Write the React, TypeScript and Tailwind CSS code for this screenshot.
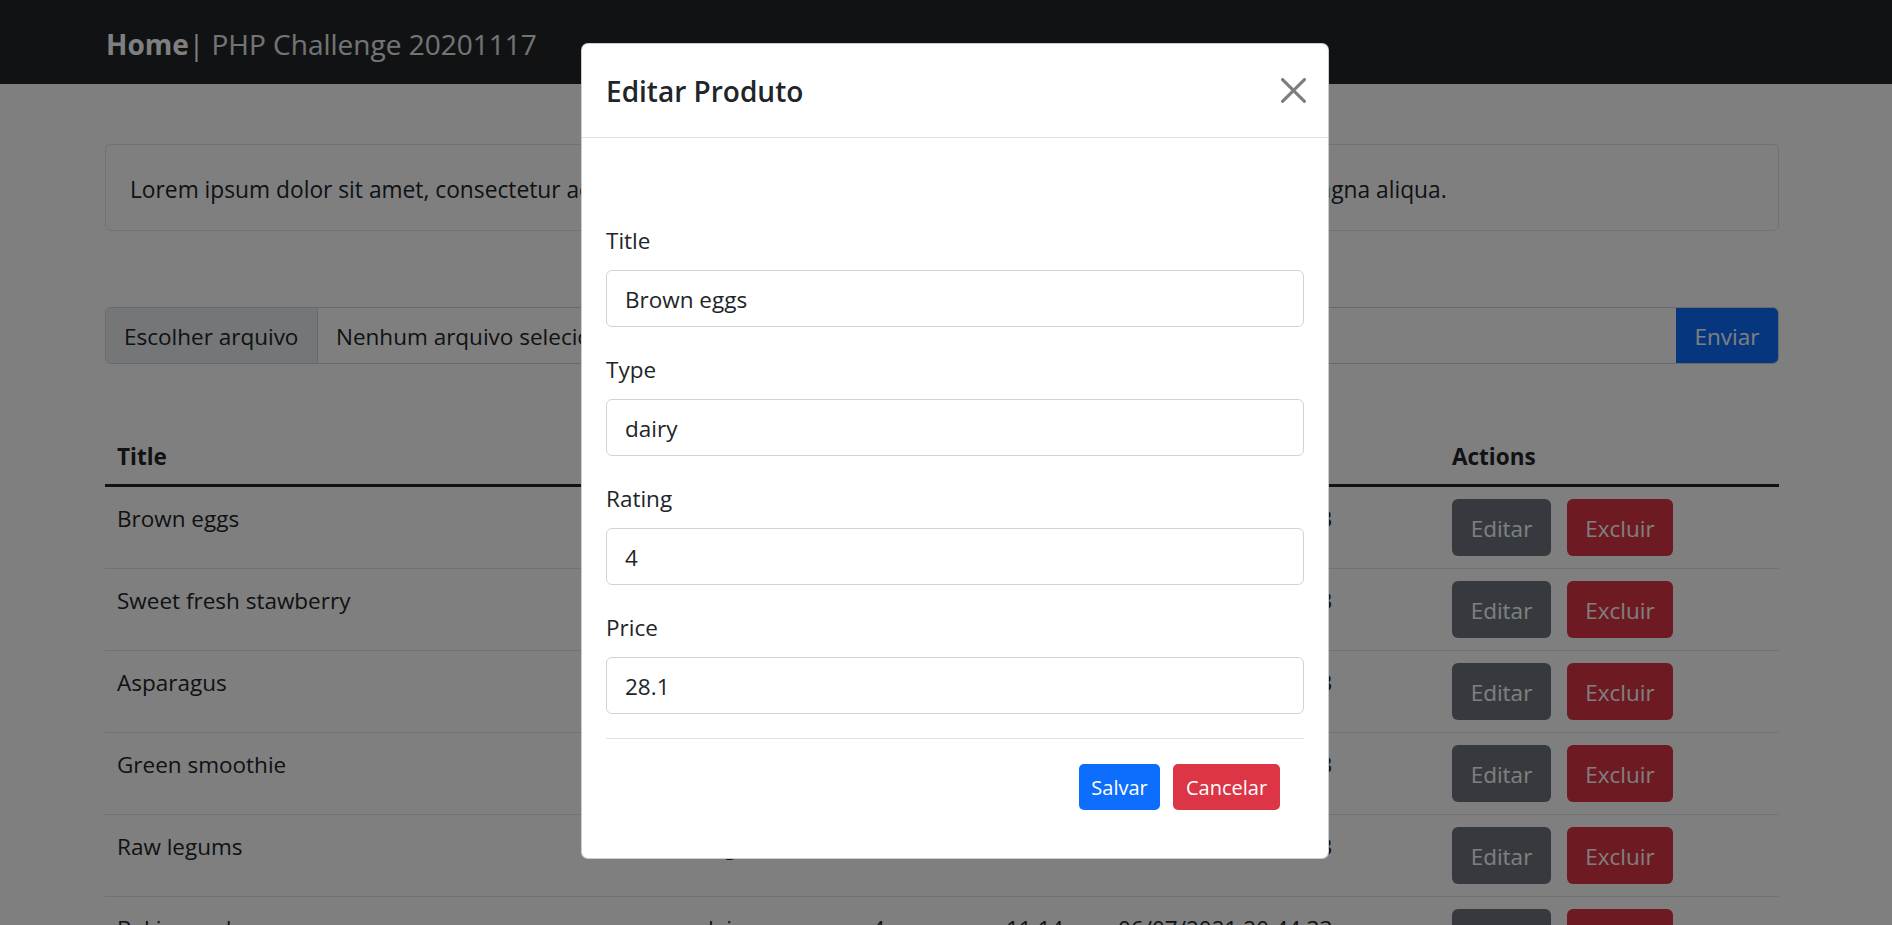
type Product = {
  title: string;
  type: string;
  rating: string;
  price: string;
  created: string;
};

const products: Product[] = [
  { title: 'Brown eggs', type: 'dairy', rating: '4', price: '28.1', created: '06/07/2021 20:44:33' },
  { title: 'Sweet fresh stawberry', type: 'fruit', rating: '4', price: '29.45', created: '06/07/2021 20:44:33' },
  { title: 'Asparagus', type: 'vegetable', rating: '3', price: '18.95', created: '06/07/2021 20:44:33' },
  { title: 'Green smoothie', type: 'dairy', rating: '4', price: '17.68', created: '06/07/2021 20:44:33' },
  { title: 'Raw legums', type: 'vegan', rating: '4', price: '17.11', created: '06/07/2021 20:44:33' },
  { title: 'Baking soda', type: 'dairy', rating: '4', price: '11.14', created: '06/07/2021 20:44:33' },
];

const fields = [
  { label: 'Title', value: 'Brown eggs' },
  { label: 'Type', value: 'dairy' },
  { label: 'Rating', value: '4' },
  { label: 'Price', value: '28.1' },
];

function Navbar() {
  return (
    <nav className="h-[84px] bg-[#212529] flex items-center">
      <div className="ml-[106px] pt-[5px] text-[28px] leading-[45px] text-white">
        <span className="font-bold">Home</span>
        <span>|</span>
        <span className="text-white/90"> PHP Challenge 20201117</span>
      </div>
    </nav>
  );
}

function ProductTable() {
  return (
    <table className="w-full table-fixed border-collapse text-left text-[22.5px] leading-[36px] text-[#212529]">
      <colgroup>
        <col className="w-[583px]" />
        <col className="w-[172px]" />
        <col className="w-[134px]" />
        <col className="w-[112px]" />
        <col className="w-[334px]" />
        <col />
      </colgroup>
      <thead>
        <tr className="border-b-[3px] border-[#212529]">
          <th className="px-[12px] pt-[15px] pb-[9px] font-bold">Title</th>
          <th className="px-[12px] pt-[15px] pb-[9px] font-bold">Type</th>
          <th className="px-[12px] pt-[15px] pb-[9px] font-bold">Rating</th>
          <th className="px-[12px] pt-[15px] pb-[9px] font-bold">Price</th>
          <th className="px-[12px] pt-[15px] pb-[9px] font-bold">Created</th>
          <th className="px-[12px] pt-[15px] pb-[9px] font-bold">Actions</th>
        </tr>
      </thead>
      <tbody>
        {products.map((p) => (
          <tr key={p.title} className="border-b border-[#dee2e6]">
            <td className="px-[12px] pt-[14px] align-top">{p.title}</td>
            <td className="px-[12px] pt-[14px] align-top">{p.type}</td>
            <td className="px-[12px] pt-[14px] align-top">{p.rating}</td>
            <td className="px-[12px] pt-[14px] align-top">{p.price}</td>
            <td className="px-[12px] pt-[14px] align-top whitespace-nowrap">{p.created}</td>
            <td className="p-[12px] align-top">
              <div className="flex gap-[16px]">
                <button className="w-[99px] h-[57px] pt-[2px] rounded-[6px] bg-[#6c757d] text-white">Editar</button>
                <button className="w-[106px] h-[57px] pt-[2px] rounded-[6px] bg-[#dc3545] text-white">Excluir</button>
              </div>
            </td>
          </tr>
        ))}
      </tbody>
    </table>
  );
}

function EditModal() {
  return (
    <div className="absolute left-[581px] top-[43px] w-[748px] bg-white border border-black/20 rounded-[7px] text-[#212529]">
      <div className="h-[94px] flex items-center justify-between pl-[24px] pr-[22px] border-b border-[#dee2e6]">
        <h5 className="text-[28px] leading-[45px] font-semibold pt-[1px]">Editar Produto</h5>
        <svg width="25" height="25" viewBox="0 0 16 16" className="opacity-50">
          <path
            fill="#000"
            d="M.293.293a1 1 0 0 1 1.414 0L8 6.586 14.293.293a1 1 0 1 1 1.414 1.414L9.414 8l6.293 6.293a1 1 0 0 1-1.414 1.414L8 9.414l-6.293 6.293a1 1 0 0 1-1.414-1.414L6.586 8 .293 1.707a1 1 0 0 1 0-1.414z"
          />
        </svg>
      </div>
      <div className="p-[24px]">
        <div className="h-[60px]" />
        {fields.map((f) => (
          <div key={f.label} className="mb-[24px]">
            <label className="block text-[22.5px] leading-[36px] mb-[12px] pt-[1px]">{f.label}</label>
            <div className="h-[57px] -mt-[1px] border border-[#ced4da] rounded-[6px] px-[18px] pt-[3px] flex items-center text-[22.5px]">
              {f.value}
            </div>
          </div>
        ))}
        <div className="border-t border-[#dee2e6] flex justify-end gap-[13px] pt-[25px] pb-[24px] pr-[24px]">
          <button className="w-[81px] h-[46px] pt-[1px] rounded-[5px] bg-[#0d6efd] text-white text-[20px]">Salvar</button>
          <button className="w-[107px] h-[46px] pt-[1px] rounded-[5px] bg-[#dc3545] text-white text-[20px]">Cancelar</button>
        </div>
      </div>
    </div>
  );
}

export default function App() {
  return (
    <div className="relative h-[925px] overflow-hidden bg-white font-['Open_Sans',sans-serif]">
      <Navbar />
      <div className="ml-[105px] w-[1674px]">
        <div className="mt-[60px] border border-[#dee2e6] rounded-[6px] px-[24px] pt-[27px] pb-[22px] text-[22.75px] leading-[36px] text-[#212529]">
          Lorem ipsum dolor sit amet, consectetur adipiscing elit, sed do eiusmod tempor incididunt ut labore et dolore magna aliqua.
        </div>
        <div className="mt-[76px] h-[57px] flex border border-[#ced4da] rounded-[6px] overflow-hidden text-[22.5px] text-[#212529]">
          <div className="w-[212px] pt-[3px] bg-[#e9ecef] border-r border-[#ced4da] flex items-center pl-[18px]">Escolher arquivo</div>
          <div className="flex-1 pt-[3px] flex items-center pl-[18px]">Nenhum arquivo selecionado</div>
          <button className="w-[102px] pt-[3px] bg-[#0d6efd] text-white">Enviar</button>
        </div>
        <div className="mt-[60px]">
          <ProductTable />
        </div>
      </div>
      <div className="absolute inset-0 bg-black/50" />
      <EditModal />
    </div>
  );
}
